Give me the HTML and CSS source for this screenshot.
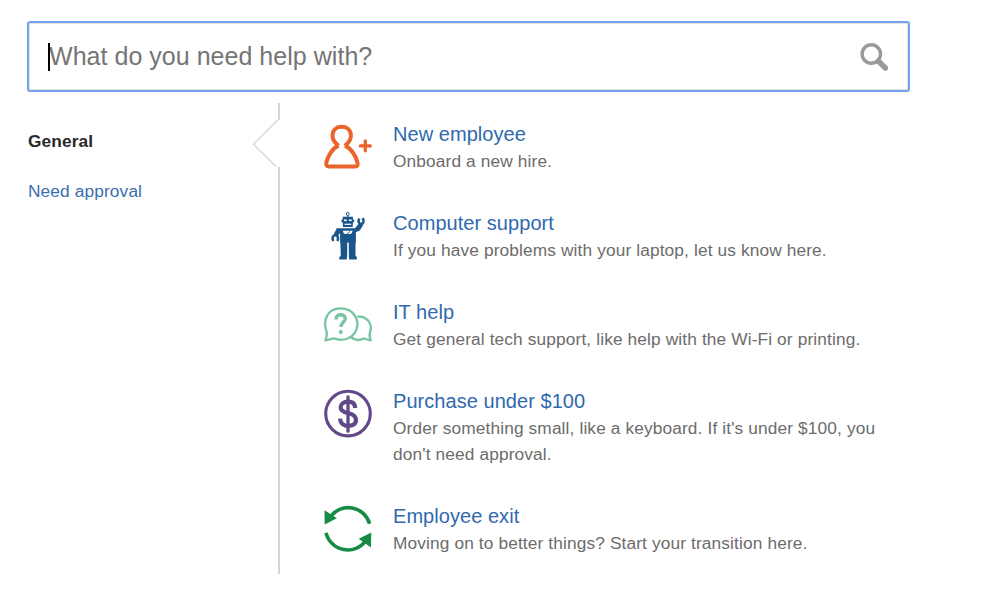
FILE: index.html
```html
<!DOCTYPE html>
<html lang="en">
<head>
<meta charset="utf-8">
<title>Help center</title>
<link rel="stylesheet" href="styles.css">
</head>
<body>
<div class="search">
  <span class="caret"></span>
  <span class="placeholder">What do you need help with?</span>
  <svg class="search-icon" width="30" height="30" viewBox="0 0 30 30"><circle cx="11.300" cy="12" r="9.200" fill="none" stroke="#999" stroke-width="3.400"/><path d="M18.500 19.300l6.900 6.700" stroke="#999" stroke-width="5.400" stroke-linecap="round"/></svg>
</div>
<div class="content">
  <nav class="groups">
    <a class="group active">General</a>
    <a class="group">Need approval</a>
    <svg class="pointer" width="28" height="49" viewBox="0 0 28 49"><path class="mask" d="M26 1L1 25.5L25 48H28V1z"/><path d="M26.200 .500L1.500 25.300L24 47.500" fill="none" stroke="#d5d5d5" stroke-width="1.300"/></svg>
  </nav>
  <main class="requests">
    <div class="request">
      <svg class="icon" viewBox="0 0 48 48"><g fill="none" stroke="#ea632b" stroke-width="4" stroke-linejoin="round"><path d="M14.600 22.800C5 15.500 7.400 3.800 17.700 3.800S30.500 15.500 20.800 22.800M14.500 22.700C8 25.500 3.800 33.500 2.400 39.200Q1.500 43.600 5 43.600H31Q34.600 43.600 33.400 39.200C32 33.500 27.500 25.500 20.900 22.700"/><path d="M41.300 18V27.800M36.300 22.900H46.300" stroke-width="3.300" stroke-linecap="round"/></g></svg>
      <div class="text"><a class="title">New employee</a><p class="desc">Onboard a new hire.</p></div>
    </div>
    <div class="request">
      <svg class="icon" viewBox="0 0 48 48"><g fill="#1a568a"><circle cx="23.700" cy="1.900" r="1.500" fill="none" stroke="#1a568a"/><path d="M23.100 3h1.200v3h-1.200zM18.700 4.800H28.900V7.500H30.200V10.200H28.900L28.700 15H19L18.700 10.200H17.500V7.500H18.700z"/><path d="M12.700 16.300H31L34.800 11.500 39.200 13 36 18.300 31.900 20.300V30.500H16.100V21L14.200 23.500H9.300Z"/><path d="M16.300 29H23.200V43.500L22.700 47.600H15.300V45.200L16.800 43.600zM24.700 29H31.500V43.600L32.800 45.200V47.600H25z"/></g><path d="M13.200 29C15.200 26 13.700 23.200 11.300 23.200S7.700 25.800 9.300 29M35.300 6.500C33.700 9.500 35 12 37 12S40.600 9.300 38.800 6" fill="none" stroke="#1a568a" stroke-width="2.600"/><g fill="#fff"><rect x="20" y="7.500" width="2.800" height="1.500"/><rect x="24.900" y="7.500" width="2.800" height="1.500"/><rect x="20.500" y="11.700" width="6.700" height="1.200"/><path d="M19 18.800H28.500Q28.200 22 25.700 22H21.300Q19.400 22 19 18.800z"/></g><path d="M23 22.200L26 19.300" stroke="#1a568a"/></svg>
      <div class="text"><a class="title">Computer support</a><p class="desc">If you have problems with your laptop, let us know here.</p></div>
    </div>
    <div class="request">
      <svg class="icon" viewBox="0 0 48 48"><g fill="none" stroke="#76c5a0" stroke-width="2.300" stroke-linejoin="round"><path d="M2.700 31C-1.500 20 3 7.500 16.500 7.400S36 19.500 32.300 29C28.500 37.500 19 41 9.500 37.300L1.400 39.500Q3.300 35 2.700 31z"/><path d="M33.300 15.700C42 14.500 49 22 46.200 30.500Q44.800 34.300 46.700 39.500L39.800 37.500C35 40 30 38.800 26.700 36"/></g><path d="M12.100 18.500C12 14.800 14 13.600 16.800 13.700S21.600 15.600 21.200 18.300C20.700 21 17 21.500 16.900 26" fill="none" stroke="#76c5a0" stroke-width="3.400"/><circle cx="16.800" cy="31" r="2" fill="#76c5a0"/></svg>
      <div class="text"><a class="title">IT help</a><p class="desc">Get general tech support, like help with the Wi-Fi or printing.</p></div>
    </div>
    <div class="request">
      <svg class="icon" viewBox="0 0 48 48"><g fill="none" stroke="#61488a"><circle cx="24" cy="23.600" r="22.300" stroke-width="3.100"/><path d="M24 7V41.200" stroke-width="3.300" stroke-linecap="round"/><path d="M31.300 18C31 13.200 28.500 11.700 24 11.700S16.600 14 16.600 17.500 20 22.200 24.500 23.200 32 26 32 30 28.500 35.800 24.200 35.800 16.400 33.500 16 28.600" stroke-width="4.200"/></g></svg>
      <div class="text"><a class="title">Purchase under $100</a><p class="desc">Order something small, like a keyboard. If it's under $100, you don't need approval.</p></div>
    </div>
    <div class="request">
      <svg class="icon" viewBox="0 0 48 48"><g fill="none" stroke="#168b43" stroke-width="3.600"><path d="M6.500 11.500A22.200 22.200 0 0 1 45.600 18.800M2 27.900A22.400 22.400 0 0 0 42 35.500"/></g><path d="M.500 5.200L12.800 13.300 .700 19.500zM47.300 27.500L46.900 42.500 34.700 33.800z" fill="#168b43"/></svg>
      <div class="text"><a class="title">Employee exit</a><p class="desc">Moving on to better things? Start your transition here.</p></div>
    </div>
  </main>
</div>
</body>
</html>
```
FILE: styles.css
```css
* { box-sizing: border-box; }
body {
  margin: 0;
  padding: 21px 0 0 27px;
  background: #fff;
  color: #6c6c6c;
  font-family: "Liberation Sans", Arial, sans-serif;
  font-size: 17.3px;
  letter-spacing: .13px;
}
.search {
  position: relative;
  display: flex;
  align-items: center;
  justify-content: space-between;
  width: 883px;
  height: 71px;
  padding: 0 18px 0 20px;
  border: 2px solid #72a2f0;
  border-radius: 3px;
  box-shadow: inset 0 0 0 1px #e4e2dd;
}
.placeholder {
  padding-bottom: 2px;
  color: #757575;
  font-size: 25px;
  line-height: 30px;
  letter-spacing: .03px;
}
.caret {
  position: absolute;
  left: 19px;
  top: 20px;
  width: 2px;
  height: 28px;
  background: #000;
}
.content {
  display: flex;
  height: 471px;
  margin-top: 11px;
}
.groups {
  position: relative;
  display: flex;
  flex-direction: column;
  gap: 24px;
  width: 253px;
  padding: 25px 0 0 1px;
  border-right: 2px solid #d6d6d6;
}
.group {
  color: #3b6eaf;
  line-height: 26px;
}
.group.active {
  color: #292929;
  font-weight: bold;
}
.pointer {
  position: absolute;
  right: -2px;
  top: 16px;
}
.mask { fill: #fff; }
.requests {
  display: flex;
  flex-direction: column;
  gap: 35px;
  padding: 17px 0 0 44px;
}
.request {
  display: flex;
  gap: 21px;
}
.icon {
  width: 48px;
  height: 48px;
  margin-top: 3px;
  overflow: visible;
}
.text { width: 495px; }
.title {
  display: block;
  color: #3069ae;
  font-size: 20px;
  line-height: 28px;
  letter-spacing: .05px;
}
.desc {
  margin: 0;
  line-height: 26px;
}
```
